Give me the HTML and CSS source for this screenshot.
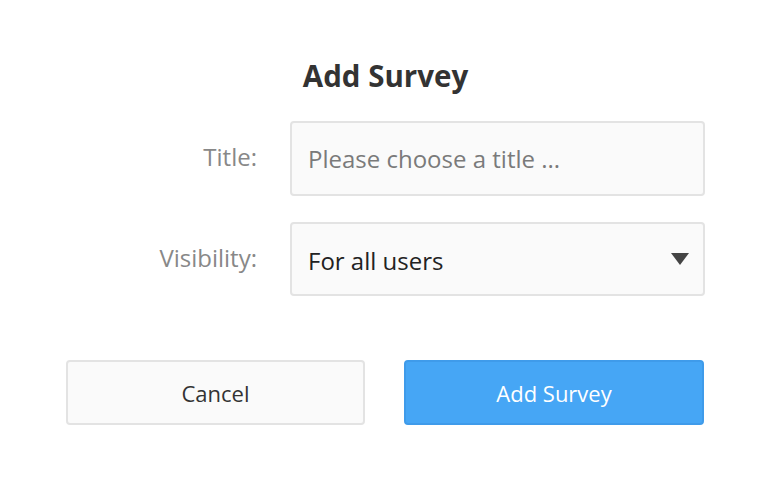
FILE: index.html
```html
<!DOCTYPE html>
<html>
<head>
<meta charset="utf-8">
<link rel="stylesheet" href="styles.css">
</head>
<body>
<div class="dialog">
  <h1 class="title">Add Survey</h1>
  <div class="form">
    <div class="row">
      <label class="label" for="t">Title:</label>
      <input id="t" class="field" type="text" placeholder="Please choose a title ...">
    </div>
    <div class="row">
      <label class="label">Visibility:</label>
      <div class="field select">
        <span>For all users</span>
        <svg class="caret" width="18" height="12" viewBox="0 0 18 12"><path d="M0 0H18L9 12Z" fill="#444"/></svg>
      </div>
    </div>
  </div>
  <div class="actions">
    <button class="btn btn-cancel">Cancel</button>
    <button class="btn btn-primary">Add Survey</button>
  </div>
</div>
</body>
</html>
```
FILE: styles.css
```css
* { box-sizing: border-box; }
html, body { margin: 0; padding: 0; background: #fff; }
body {
  font-family: "Open Sans", "Noto Sans", sans-serif;
  color: #333;
}
.dialog {
  width: 639px;
  margin-left: 66px;
  padding-top: 55px;
}
.title {
  margin: 0;
  text-align: center;
  font-size: 29.5px;
  font-weight: 700;
  color: #333;
  line-height: 42px;
  padding-left: 0;
}
.form {
  margin-top: 24px;
  display: flex;
  flex-direction: column;
  gap: 26px;
}
.row {
  display: flex;
  align-items: center;
  gap: 33px;
}
.label {
  width: 191px;
  text-align: right;
  font-size: 24px;
  color: #888;
  margin-top: -4px;
}
.field {
  width: 415px;
  height: 75px;
  border: 2px solid #e3e3e3;
  border-radius: 4px;
  background: #fafafa;
  font-family: inherit;
  font-size: 24px;
  color: #222;
  padding: 0 16px;
  outline: none;
}
.field::placeholder { color: #7a7a7a; }
.select {
  display: flex;
  align-items: center;
  justify-content: space-between;
  height: 74px;
  padding-right: 14px;
}
.select span { padding-top: 2px; }
.actions {
  margin-top: 64px;
  display: flex;
  gap: 39px;
}
.btn {
  width: 300px;
  height: 65px;
  border-radius: 4px;
  font-family: inherit;
  font-size: 22px;
  cursor: pointer;
}
.btn-cancel {
  width: 299px;
  background: #fafafa;
  border: 2px solid #e3e3e3;
  color: #333;
}
.btn-primary {
  background: #46a6f5;
  border: 2px solid #3f9bea;
  color: #fff;
}
```
